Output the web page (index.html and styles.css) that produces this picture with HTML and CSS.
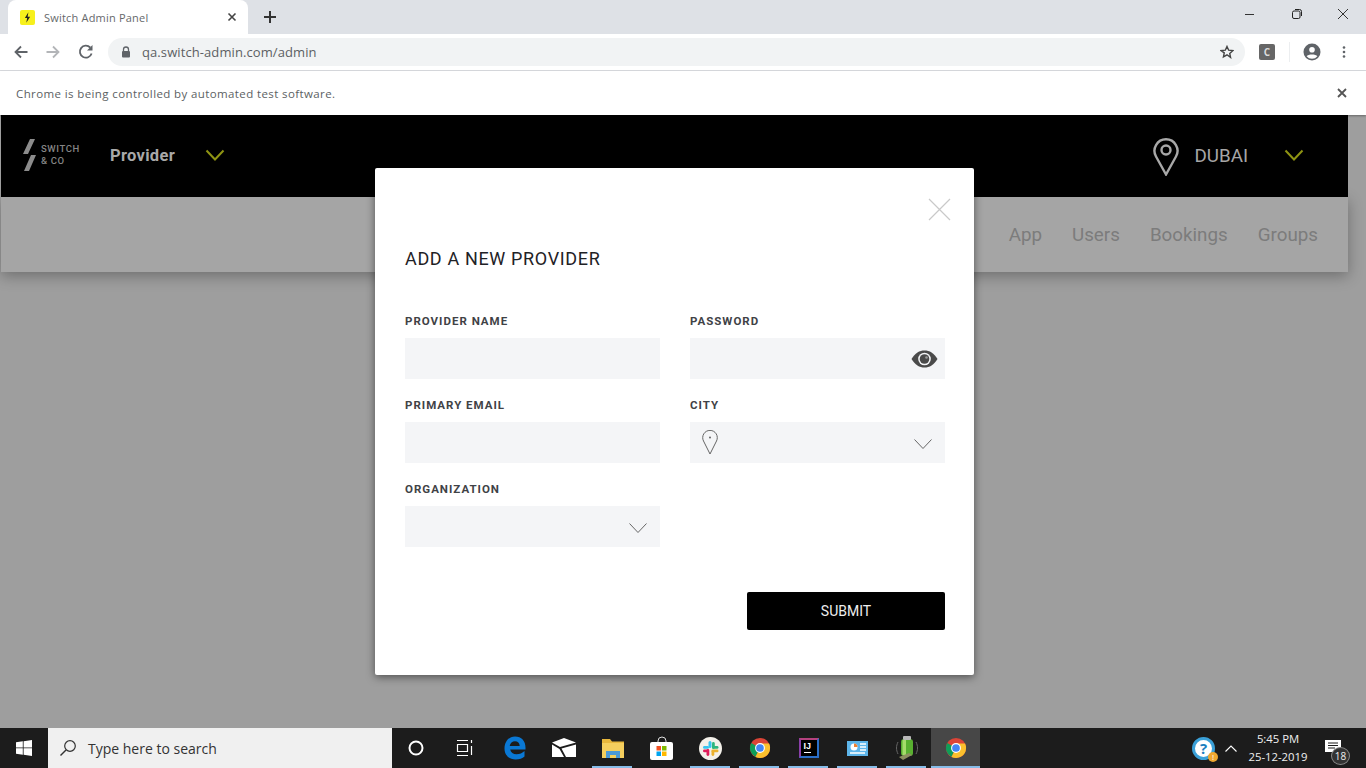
FILE: index.html
```html
<!DOCTYPE html>
<html lang="en">
<head>
<meta charset="utf-8">
<title>Switch Admin Panel</title>
<link rel="stylesheet" href="styles.css">
</head>
<body>
<svg class="defs" width="0" height="0" aria-hidden="true">
  <symbol id="chrome" viewBox="0 0 24 24">
    <circle cx="12" cy="12" r="11" fill="#db4437"/>
    <path d="M12 12 2.5 6.5A11 11 0 0 0 7 21.8L12 12Z" fill="#0f9d58"/>
    <path d="M12 12H23A11 11 0 0 1 7 21.8L12 12Z" fill="#fbc02d"/>
    <path d="M12 7H21.9A11 11 0 0 1 23 12H17Z" fill="#fbc02d"/>
    <circle cx="12" cy="12" r="5.4" fill="#fff"/>
    <circle cx="12" cy="12" r="4.2" fill="#4285f4"/>
  </symbol>
  <symbol id="chev" viewBox="0 0 20 12">
    <path d="M1.500 1.500 10 10.500 18.500 1.500" fill="none" stroke="currentColor"/>
  </symbol>
</svg>

<div class="tabstrip">
  <div class="tab">
    <span class="favicon"><svg width="7" height="11" viewBox="0 0 8 12"><path d="M5 0 1 6.5h2.600L2.600 12 7 5H4.200Z" fill="#222"/></svg></span>
    <span class="tab-title">Switch Admin Panel</span>
    <svg class="tab-x" width="10" height="10" viewBox="0 0 10 10"><path d="M1.500 1.500l7 7M8.500 1.500l-7 7" stroke="#444" stroke-width="1.600"/></svg>
  </div>
  <svg class="newtab" width="12" height="12" viewBox="0 0 12 12"><path d="M6 0v12M0 6h12" stroke="#333" stroke-width="2"/></svg>
  <div class="winctl">
    <svg width="10" height="10" viewBox="0 0 10 10"><path d="M0 5.500h9" stroke="#333"/></svg>
    <svg width="12" height="12" viewBox="0 0 12 12"><rect x="1.500" y="3" width="7.500" height="7.500" rx="1.500" fill="none" stroke="#222"/><path d="M4 1.500h4.500a2 2 0 0 1 2 2V8" fill="none" stroke="#222"/></svg>
    <svg width="12" height="12" viewBox="0 0 12 12"><path d="M1 1l10 10M11 1 1 11" stroke="#333"/></svg>
  </div>
</div>

<div class="toolbar">
  <svg class="nav-ico" width="14" height="14" viewBox="0 0 14 14"><path d="M13.500 7H1.500M7 1.500 1.500 7 7 12.500" fill="none" stroke="#5f6368" stroke-width="1.800"/></svg>
  <svg class="nav-ico" width="14" height="14" viewBox="0 0 14 14"><path d="M.5 7h12M7 1.500 12.500 7 7 12.500" fill="none" stroke="#b3b5b8" stroke-width="1.800"/></svg>
  <svg class="nav-ico" width="16" height="16" viewBox="0 0 16 16"><path d="M13.600 9.500A6 6 0 1 1 12.200 3.500" fill="none" stroke="#5f6368" stroke-width="1.800"/><path d="M14.500 1v5.500H9Z" fill="#5f6368"/></svg>
  <div class="omnibox">
    <svg class="lock" width="10" height="12" viewBox="0 0 10 12"><path d="M2.500 5V3.500a2.500 2.500 0 0 1 5 0V5" fill="none" stroke="#5f6368" stroke-width="1.300"/><rect x="1" y="5" width="8" height="6.500" rx="1" fill="#5f6368"/></svg>
    <span class="url">qa.switch-admin.com/admin</span>
    <svg class="star" width="14" height="14" viewBox="0 0 24 24"><path d="M12 2.500l2.900 6.400 7 .8-5.200 4.700 1.400 6.900L12 16.800l-6.100 3.500 1.400-6.900L2.100 9.700l7-.8Z" fill="none" stroke="#444" stroke-width="2.400"/></svg>
  </div>
  <span class="ext"><span class="ext-c">C</span></span>
  <span class="tool-sep"></span>
  <svg class="avatar" width="18" height="18" viewBox="0 0 18 18"><circle cx="9" cy="9" r="8.500" fill="#5f6368"/><circle cx="9" cy="6.800" r="2.800" fill="#fff"/><path d="M3.600 13.200c1.600-2.200 9.200-2.200 10.800 0A7 7 0 0 1 9 15.800a7 7 0 0 1-5.400-2.600Z" fill="#fff"/></svg>
  <svg class="kebab" width="4" height="14" viewBox="0 0 4 14"><circle cx="2" cy="2.500" r="1.300" fill="#5f6368"/><circle cx="2" cy="7" r="1.300" fill="#5f6368"/><circle cx="2" cy="11.500" r="1.300" fill="#5f6368"/></svg>
</div>

<div class="infobar">
  <span>Chrome is being controlled by automated test software.</span>
  <svg width="10" height="10" viewBox="0 0 10 10"><path d="M1 1l8 8M9 1 1 9" stroke="#555" stroke-width="1.800"/></svg>
</div>

<main class="app">
  <header class="app-header">
    <div class="logo">
      <svg width="14" height="33" viewBox="0 0 14 33"><path d="M7 0h5L5 15H0ZM8 16h5L6 32H1Z" fill="#8c8c8c"/></svg>
      <div class="logo-text"><span>SWITCH</span><span>&amp; CO</span></div>
    </div>
    <span class="section">Provider</span>
    <svg class="chev-y" width="20" height="12"><use href="#chev"/></svg>
    <div class="city">
      <svg width="26" height="39" viewBox="0 0 26 39"><path d="M13 37.500 3 19.500A11.500 11.500 0 1 1 23 19.500Z" fill="none" stroke="#a8a8a8" stroke-width="2.400"/><circle cx="13" cy="13" r="4.500" fill="none" stroke="#a8a8a8" stroke-width="2.400"/></svg>
      <span class="city-name">DUBAI</span>
      <svg class="chev-y" width="20" height="12"><use href="#chev"/></svg>
    </div>
  </header>
  <nav class="subnav">
    <a>App</a><a>Users</a><a>Bookings</a><a>Groups</a>
  </nav>

  <section class="modal">
    <svg class="modal-x" width="23" height="23" viewBox="0 0 23 23"><path d="M1 1l21 21M22 1 1 22" stroke="#c9c9c9" stroke-width="1.200"/></svg>
    <h1>ADD A NEW PROVIDER</h1>
    <div class="form-grid">
      <div class="field"><label>PROVIDER NAME</label><div class="input"></div></div>
      <div class="field"><label>PASSWORD</label>
        <div class="input input-end input-eye">
          <svg width="27" height="18" viewBox="0 0 27 18"><path d="M.5 9C4 3 8.500 .5 13.500 .5S23 3 26.500 9C23 15 18.500 17.500 13.500 17.500S4 15 .5 9Z" fill="#4a4a4a"/><circle cx="13.500" cy="9" r="6.300" fill="#f4f5f7"/><circle cx="13.500" cy="9" r="4.800" fill="#4a4a4a"/><circle cx="15.500" cy="7.500" r="1.300" fill="#9a9a9a"/></svg>
        </div>
      </div>
      <div class="field"><label>PRIMARY EMAIL</label><div class="input"></div></div>
      <div class="field"><label>CITY</label>
        <div class="input input-between">
          <svg width="16" height="25" viewBox="0 0 16 25"><path d="M8 24 1.500 11A7.300 7.300 0 1 1 14.500 11Z" fill="none" stroke="#666"/><circle cx="8" cy="7.500" r=".9" fill="#555"/></svg>
          <svg class="chev-g" width="20" height="12"><use href="#chev"/></svg>
        </div>
      </div>
      <div class="field"><label>ORGANIZATION</label>
        <div class="input input-end"><svg class="chev-g" width="20" height="12"><use href="#chev"/></svg></div>
      </div>
    </div>
    <div class="actions"><button class="submit" type="button">SUBMIT</button></div>
  </section>
</main>

<footer class="taskbar">
  <div class="start"><svg width="16" height="16" viewBox="0 0 16 16"><path d="M0 2.300 6.800 1.300V7.500H0ZM7.600 1.200 16 0V7.500H7.600ZM0 8.300H6.800V14.700L0 13.700ZM7.600 8.300H16V16L7.600 14.800Z" fill="#fff"/></svg></div>
  <div class="search">
    <svg width="18" height="18" viewBox="0 0 18 18"><circle cx="11" cy="7" r="5.300" fill="none" stroke="#333" stroke-width="1.200"/><path d="M7 11 1.500 16.500" stroke="#333" stroke-width="1.400"/></svg>
    <span>Type here to search</span>
  </div>
  <div class="tb-btn"><svg width="16" height="16" viewBox="0 0 16 16"><circle cx="8" cy="8" r="6.500" fill="none" stroke="#fff" stroke-width="2"/></svg></div>
  <div class="tb-btn tb-last"><svg width="17" height="16" viewBox="0 0 17 16"><path d="M1 .5h11M1 15.500h11M1.500 4.500h10v7h-10ZM15.500 0v3M15.500 6v9" fill="none" stroke="#fff" stroke-width="1.200"/></svg></div>

  <div class="app-ico"><svg width="22" height="24" viewBox="0 0 22 24"><path d="M11 .5C4.500 .5.500 6 .5 12.500c0 7 5 11 11 11 4 0 7-1.200 9-3v-5.500c-2 2-5 3.300-8 3.300-3.300 0-5.800-1.600-6.300-4.800H21.500V11.500C21.500 5 17.500.5 11 .5ZM5.700 10C6.200 7.300 8.300 5.300 11 5.300c2.800 0 4.600 1.700 4.700 4.700Z" fill="#0a78d4"/></svg></div>
  <div class="app-ico"><svg width="24" height="20" viewBox="0 0 24 20"><path d="M0 4.500 12 0 24 4.500 8 9ZM0 6.500 7.500 11 12 19H0ZM24 6.500V19H14L9.500 10.500Z" fill="#fff"/></svg></div>
  <div class="app-ico running"><svg width="22" height="19" viewBox="0 0 22 19"><path d="M0 0h8l2 2.500h12V19H0Z" fill="#e8b73c"/><path d="M0 4h22v15H0Z" fill="#f5cf5e"/><path d="M4 19v-7h14v7h-4v-3H8v3Z" fill="#4b9ad8"/></svg></div>
  <div class="app-ico"><svg width="24" height="24" viewBox="0 0 24 24"><path d="M8 7V5a4 4 0 0 1 8 0v2" fill="none" stroke="#ddd"/><rect y="6" width="23" height="18" rx="2" fill="#fff"/><rect x="6.500" y="10" width="4.500" height="4.500" fill="#f25022"/><rect x="12" y="10" width="4.500" height="4.500" fill="#7fba00"/><rect x="6.500" y="15.500" width="4.500" height="4.500" fill="#00a4ef"/><rect x="12" y="15.500" width="4.500" height="4.500" fill="#ffb900"/></svg></div>
  <div class="app-ico running"><svg width="23" height="23" viewBox="0 0 23 23"><circle cx="11.500" cy="11.500" r="11.500" fill="#f4f1ea"/><rect x="9.500" y="4" width="3" height="7" rx="1.500" fill="#36c5f0"/><rect x="4" y="9" width="6" height="2.800" rx="1.400" fill="#36c5f0"/><rect x="13" y="5" width="2.800" height="7" rx="1.400" fill="#2eb67d"/><rect x="13" y="9" width="6.500" height="2.800" rx="1.400" fill="#2eb67d"/><rect x="12.500" y="12.500" width="7" height="2.800" rx="1.400" fill="#ecb22e"/><rect x="12.500" y="13" width="2.800" height="6" rx="1.400" fill="#ecb22e"/><rect x="7.500" y="12" width="2.800" height="7" rx="1.400" fill="#e01e5a"/><rect x="4" y="12.500" width="6" height="2.800" rx="1.400" fill="#e01e5a"/></svg></div>
  <div class="app-ico running"><svg width="22" height="22"><use href="#chrome"/></svg></div>
  <div class="app-ico running">
    <span class="ij"><span class="ij-t">IJ</span><span class="ij-bar"></span></span>
  </div>
  <div class="app-ico running"><svg width="21" height="15" viewBox="0 0 21 15"><rect width="21" height="15" fill="#5db5ea"/><circle cx="7" cy="6" r="3.500" fill="#fff"/><path d="M7 2.500V6h3.500A3.500 3.500 0 0 0 7 2.500Z" fill="#f08030"/><path d="M13 3h6M13 6h6M13 9h6M3 12h15" stroke="#fff" stroke-width="1.300"/></svg></div>
  <div class="app-ico running"><svg width="22" height="24" viewBox="0 0 22 24"><path d="M2 6C0 10 0 14 2 18M20 6c2 4 2 8 0 12" fill="none" stroke="#666"/><rect x="5" y="3" width="12" height="17" rx="3" fill="#58b030"/><rect x="7" y="0" width="8" height="4" rx="1" fill="#b9b9b9"/><rect x="6.500" y="4" width="3.500" height="15" fill="#a4dc6a"/><path d="M3 21l10-4 3 2-9 5Z" fill="#8d8f60"/></svg></div>
  <div class="app-ico active"><svg width="22" height="22"><use href="#chrome"/></svg></div>

  <div class="tray">
    <span class="help"><span class="help-q">?</span><span class="help-i">!</span></span>
    <svg class="caret" width="12" height="7" viewBox="0 0 12 7"><path d="M.5 6.500 6 1l5.500 5.500" fill="none" stroke="#fff" stroke-width="1.100"/></svg>
    <div class="clock"><span>5:45 PM</span><span>25-12-2019</span></div>
    <span class="notif">
      <svg width="16" height="14" viewBox="0 0 16 14"><path d="M0 0h16v12H0Z" fill="#fff"/><path d="M3 3h10M3 5.500h10M3 8h7" stroke="#1c1c1c"/></svg>
      <span class="notif-n">18</span>
    </span>
  </div>
</footer>
</body>
</html>
```
FILE: styles.css
```css
* { box-sizing: border-box; }
html, body { margin: 0; padding: 0; }
body {
  width: 1366px;
  height: 768px;
  overflow: hidden;
  display: flex;
  flex-direction: column;
  background: #9e9e9e;
  font-family: "Open Sans", "Liberation Sans", sans-serif;
}
.defs { position: absolute; }

/* Browser chrome */
.tabstrip {
  height: 34px;
  flex: none;
  display: flex;
  align-items: center;
  padding-left: 8px;
  background: #dee1e6;
}
.tab {
  width: 240px;
  height: 34px;
  display: flex;
  align-items: center;
  padding: 0 11px 0 12px;
  background: #fff;
  border-radius: 8px 8px 0 0;
}
.favicon {
  width: 15px;
  height: 15px;
  display: flex;
  align-items: center;
  justify-content: center;
  border-radius: 2px;
  background: #f7f01c;
}
.tab-title {
  flex: 1;
  margin-left: 9px;
  font-size: 11px;
  letter-spacing: .2px;
  color: #66686b;
}
.newtab { margin-left: 16px; }
.winctl {
  margin-left: auto;
  display: flex;
  align-items: center;
  gap: 34px;
  padding: 0 17px 6px 0;
}
.winctl svg:first-child { margin-right: 2px; }
.toolbar {
  height: 37px;
  flex: none;
  display: flex;
  align-items: center;
  padding: 0 0 1px 14px;
  background: #fff;
  border-bottom: 1px solid #dadce0;
}
.nav-ico { margin-right: 18px; }
.toolbar .nav-ico:nth-child(3) { margin-right: 14px; }
.omnibox {
  width: 1137px;
  height: 28px;
  display: flex;
  align-items: center;
  padding: 0 11px 0 13px;
  border-radius: 14px;
  background: #f1f3f4;
}
.url {
  flex: 1;
  margin-left: 11px;
  font-size: 13px;
  letter-spacing: .09px;
  color: #5c5f63;
}
.ext {
  width: 16px;
  height: 16px;
  margin-left: 14px;
  display: flex;
  align-items: center;
  justify-content: center;
  border-radius: 2px;
  background: #666;
}
.ext-c { font-size: 10px; font-weight: 700; color: #ddd; }
.tool-sep { width: 1px; height: 20px; margin-left: 14px; background: #eceef0; }
.avatar { margin-left: 13px; }
.kebab { margin-left: 21px; }
.infobar {
  height: 44px;
  flex: none;
  display: flex;
  align-items: center;
  justify-content: space-between;
  padding: 0 19px 0 16px;
  background: #fff;
  font-size: 11.500px;
  letter-spacing: .39px;
  color: #5c5f63;
  box-shadow: 0 1px 2px rgba(0,0,0,.35);
  position: relative;
  z-index: 2;
}

/* App */
.app {
  flex: 1;
  position: relative;
  padding: 0 18px 0 1px;
  font-family: Roboto, "Liberation Sans", sans-serif;
}
.app-header {
  height: 82px;
  display: flex;
  align-items: center;
  padding: 0 44px 0 22px;
  background: #000;
}
.logo { display: flex; align-items: center; gap: 4px; width: 87px; margin-bottom: 2px; }
.logo-text {
  display: flex;
  flex-direction: column;
  font-size: 9.500px;
  font-weight: 500;
  letter-spacing: .6px;
  line-height: 12px;
  color: #858585;
}
.section { margin-bottom: 2px; font-size: 16.500px; font-weight: 700; letter-spacing: .3px; color: #a9a9a9; }
.chev-y { margin: 0 0 2px 30px; color: #8f9413; stroke-width: 2; }
.city { margin-left: auto; display: flex; align-items: center; }
.city-name { margin-left: 15px; font-size: 18.800px; color: #a6a6a6; }
.city .chev-y { margin-left: 36px; }
.subnav {
  height: 75px;
  display: flex;
  align-items: center;
  justify-content: flex-end;
  gap: 30px;
  padding-right: 30px;
  background: #a5a5a5;
  font-size: 18.800px;
  color: #7c7c7c;
  box-shadow: 0 4px 14px rgba(0,0,0,.3);
}

/* Modal */
.modal {
  position: absolute;
  left: 375px;
  top: 53px;
  width: 599px;
  height: 507px;
  padding: 80px 29px 0 30px;
  background: #fff;
  border-radius: 2px;
  box-shadow: 0 2px 8px rgba(0,0,0,.5);
}
.modal-x { position: absolute; top: 30px; right: 23px; }
.modal h1 {
  margin: 0;
  height: 22px;
  font-size: 18px;
  line-height: 22px;
  font-weight: 400;
  letter-spacing: .65px;
  color: #1f2226;
}
.form-grid {
  display: grid;
  grid-template-columns: 255px 255px;
  column-gap: 30px;
  row-gap: 22px;
  margin-top: 47px;
}
.field { display: flex; flex-direction: column; gap: 13px; }
.field label {
  height: 8px;
  line-height: 8px;
  font-size: 11.500px;
  font-weight: 700;
  letter-spacing: 1px;
  color: #3f4246;
}
.input { height: 41px; background: #f4f5f7; display: flex; align-items: center; padding: 0 12px; }
.input-eye { padding-right: 7px; }
.input-end { justify-content: flex-end; }
.input-between { justify-content: space-between; }
.chev-g { margin-top: 3px; color: #666; stroke-width: 1; }
.actions { display: flex; justify-content: flex-end; margin-top: 45px; }
.submit {
  width: 198px;
  height: 38px;
  border: 0;
  border-radius: 2px;
  background: #000;
  color: #eee;
  font-family: Roboto, "Liberation Sans", sans-serif;
  font-size: 14px;
}

/* Taskbar */
.taskbar {
  height: 40px;
  flex: none;
  display: flex;
  align-items: center;
  background: #1c1c1c;
  font-family: "Open Sans", "Liberation Sans", sans-serif;
}
.start { width: 48px; display: flex; justify-content: center; }
.search {
  width: 344px;
  height: 40px;
  display: flex;
  align-items: center;
  gap: 11px;
  padding-left: 11px;
  background: #f0f0f0;
  font-size: 14px;
  color: #333;
}
.tb-btn { width: 48px; display: flex; justify-content: center; }
.tb-last { margin-right: 2px; }
.app-ico {
  width: 49px;
  height: 40px;
  display: flex;
  align-items: center;
  justify-content: center;
  position: relative;
}
.running::after {
  content: "";
  position: absolute;
  left: 4px;
  right: 5px;
  bottom: 0;
  height: 2px;
  background: #86bce8;
}
.active { background: #474747; }
.active::after {
  content: "";
  position: absolute;
  left: 0;
  right: 0;
  bottom: 0;
  height: 2px;
  background: #86bce8;
}
.ij {
  width: 20px;
  height: 20px;
  display: flex;
  flex-direction: column;
  padding: 2px 3px;
  background: #000;
  border: 2px solid;
  border-color: #b5427e #2a6fc9 #2a6fc9 #8a3fa8;
}
.ij-t {
  font-family: "Liberation Sans", sans-serif;
  font-size: 9px;
  line-height: 8px;
  font-weight: 700;
  color: #fff;
}
.ij-bar { width: 7px; height: 1px; margin-top: 2px; background: #fff; }
.tray { margin-left: auto; display: flex; align-items: center; }
.help {
  width: 23px;
  height: 23px;
  position: relative;
  display: flex;
  align-items: center;
  justify-content: center;
  border-radius: 50%;
  background: #fff;
  border: 3px solid #3aa0d8;
}
.help-q { font-size: 15px; line-height: 15px; font-weight: 700; color: #1d7fc0; }
.help-i {
  position: absolute;
  right: -6px;
  bottom: -5px;
  width: 10px;
  height: 10px;
  border-radius: 50%;
  background: #f0a830;
  color: #fff;
  font-size: 8px;
  line-height: 10px;
  text-align: center;
}
.caret { margin-left: 10px; }
.clock {
  width: 72px;
  margin-left: 5px;
  display: flex;
  flex-direction: column;
  align-items: center;
  font-size: 11.300px;
  line-height: 18px;
  color: #f0f0f0;
}
.notif {
  width: 52px;
  position: relative;
  display: flex;
  padding-left: 11px;
  margin-bottom: 2px;
}
.notif-n {
  position: absolute;
  left: 17px;
  top: 7px;
  width: 19px;
  height: 18px;
  border-radius: 50%;
  background: #333;
  border: 1px solid #888;
  color: #eee;
  font-size: 10px;
  line-height: 16px;
  text-align: center;
}
```
